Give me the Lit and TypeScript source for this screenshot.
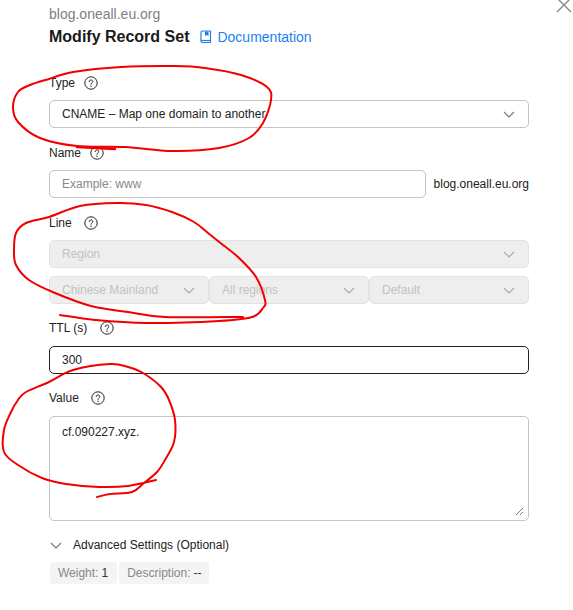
import { LitElement, html, css, svg } from "lit";
import { customElement } from "lit/decorators.js";

type P = [number, number];
const strokes: { pts: P[]; w?: number }[] = [
  { pts: [[49,79],[30,85],[18,92],[13,107],[18,122],[40,138],[77,146],[125,147],[172,151],[219,148],[249,138],[263,123],[271,100],[267,87],[241,75],[205,68],[175,66],[121,67],[73,72],[49,79]] },
  { pts: [[77,147],[115,149]], w: 2.5 },
  { pts: [[243,317],[165,317],[128,312],[91,306],[55,293],[29,280],[16,265],[14,250],[16,233],[26,223],[49,217],[80,206],[117,203],[146,205],[172,212],[194,222],[208,233],[223,245],[238,257],[256,277],[265,300],[263,308],[252,317],[219,321],[146,323],[95,320],[60,315]] },
  { pts: [[156,480],[128,486],[99,487],[66,484],[42,478],[18,465],[4,452],[4,430],[11,412],[18,400],[26,392],[49,382],[73,370],[110,364],[128,367],[143,373],[161,387],[169,400],[175,420],[174,442],[165,460],[157,472],[144,483],[132,492],[110,494],[97,497]] },
];

function smooth(p: P[]): string {
  let d = `M${p[0][0]} ${p[0][1]}`;
  for (let i = 0; i < p.length - 1; i++) {
    const a = p[Math.max(0, i - 1)], b = p[i], c = p[i + 1], e = p[Math.min(p.length - 1, i + 2)];
    const c1 = [b[0] + (c[0] - a[0]) / 6, b[1] + (c[1] - a[1]) / 6];
    const c2 = [c[0] - (e[0] - b[0]) / 6, c[1] - (e[1] - b[1]) / 6];
    d += ` C${c1[0].toFixed(1)} ${c1[1].toFixed(1)} ${c2[0].toFixed(1)} ${c2[1].toFixed(1)} ${c[0]} ${c[1]}`;
  }
  return d;
}

const help = html`<svg class="help" width="14" height="14" viewBox="0 0 14 14" fill="none">
  <circle cx="7" cy="7" r="6.2" stroke="#222" stroke-width="1"/>
  <path d="M5.2 5.6C5.2 4.6 6 4 7 4s1.8.6 1.8 1.5c0 1.3-1.8 1.4-1.8 2.8" stroke="#222" stroke-width="1" stroke-linecap="round"/>
  <circle cx="7" cy="10.2" r=".7" fill="#222"/>
</svg>`;

const chevron = html`<svg class="chev" width="12" height="7" viewBox="0 0 12 7" fill="none">
  <path d="M1 1l5 5 5-5" stroke="currentColor" stroke-width="1.1"/>
</svg>`;

@customElement("app-root")
export class AppRoot extends LitElement {
  static styles = css`
    :host {
      display: block;
      position: relative;
      width: 573px;
      height: 610px;
      overflow: hidden;
      background: #fff;
      font-family: "Liberation Sans", Arial, sans-serif;
      font-size: 12px;
      color: #222;
    }
    .panel {
      display: flex;
      flex-direction: column;
      width: 480px;
      padding: 6px 44px 0 49px;
    }
    .domain { line-height: 16px; color: #808080; height: 16px; font-size: 14px; }
    .head { display: flex; align-items: center; height: 20px; margin-top: 5px; }
    .title { font-size: 16px; font-weight: 700; color: #1a1a1a; margin-right: 11px; }
    .doc { display: flex; align-items: center; gap: 5px; color: #1e7fef; font-size: 14px; }
    .label { display: flex; align-items: center; height: 16px; color: #222; line-height: 16px; }
    .help { margin-left: 9px; flex: none; }
    .wide .help { margin-left: 13px; }
    .mid .help { margin-left: 12px; }
    .l-type { margin-top: 28px; }
    .l-name { margin-top: 17px; }
    .l-line { margin-top: 17px; }
    .l-ttl { margin-top: 16px; }
    .l-value { margin-top: 16px; }
    .ctl {
      box-sizing: border-box;
      height: 28px;
      border: 1px solid #c4c4c4;
      border-radius: 5px;
      display: flex;
      align-items: center;
      justify-content: space-between;
      padding: 0 13px 0 12px;
      margin-top: 9px;
      color: #222;
      background: #fff;
    }
    .chev { color: #777; flex: none; }
    .name-row { display: flex; align-items: center; gap: 8px; margin-top: 9px; }
    .name-row .ctl { flex: 1; margin-top: 0; color: #888; }
    .suffix { white-space: nowrap; color: #222; }
    .off { background: #eee; border-color: #e2e2e2; color: #c2c2c2; }
    .off .chev { color: #a8a8a8; }
    .trio { display: grid; grid-template-columns: 160px 160px 160px; margin-top: 8px; }
    .trio .ctl { margin-top: 0; }
    .active { border-color: #222; }
    .ttl { margin-top: 10px; }
    .area {
      position: relative;
      box-sizing: border-box;
      height: 105px;
      border: 1px solid #c4c4c4;
      border-radius: 5px;
      padding: 8px 12px;
      margin-top: 10px;
      line-height: 14px;
    }
    .grip { position: absolute; right: 4px; bottom: 4px; }
    .adv { display: flex; align-items: center; gap: 11px; height: 16px; margin-top: 16px; color: #222; }
    .adv .chev { color: #777; margin-left: 1px; }
    .tags { display: flex; gap: 2px; margin-top: 9px; margin-left: 1px; }
    .tag {
      display: flex;
      align-items: center;
      height: 22px;
      padding: 0 8px;
      background: #f4f4f4;
      border-radius: 3px;
      color: #888;
      gap: 3px;
    }
    .tag:first-child { padding-right: 9px; }
    .tag:last-child { padding-right: 7px; }
    .tag b { font-weight: 400; color: #333; }
    .close { position: absolute; right: 0; top: -3px; }
    .ink { position: absolute; left: 0; top: 0; pointer-events: none; }
  `;

  render() {
    return html`
      <div class="panel">
        <div class="domain">blog.oneall.eu.org</div>
        <div class="head">
          <span class="title">Modify Record Set</span>
          <span class="doc">
            <svg width="12" height="14" viewBox="0 0 12 14" fill="none">
              <path d="M2.5 1H10.5V12.5H2.5C1.6 12.5 1 11.9 1 11V2.5C1 1.6 1.6 1 2.5 1Z" stroke="#1e7fef" stroke-width="1.2"/>
              <path d="M1 10.5H10.5" stroke="#1e7fef" stroke-width="1.2"/>
              <path d="M5 1.5H8.5V6L6.75 5L5 6Z" fill="#1e7fef"/>
            </svg>
            Documentation
          </span>
        </div>

        <div class="label l-type">Type${help}</div>
        <div class="ctl"><span>CNAME – Map one domain to another</span>${chevron}</div>

        <div class="label l-name">Name${help}</div>
        <div class="name-row">
          <div class="ctl">Example: www</div>
          <span class="suffix">blog.oneall.eu.org</span>
        </div>

        <div class="label l-line mid">Line${help}</div>
        <div class="ctl off"><span>Region</span>${chevron}</div>
        <div class="trio">
          <div class="ctl off"><span>Chinese Mainland</span>${chevron}</div>
          <div class="ctl off"><span>All regions</span>${chevron}</div>
          <div class="ctl off"><span>Default</span>${chevron}</div>
        </div>

        <div class="label l-ttl wide">TTL (s)${help}</div>
        <div class="ctl active ttl">300</div>

        <div class="label l-value mid">Value${help}</div>
        <div class="area">
          cf.090227.xyz.
          <svg class="grip" width="9" height="9" viewBox="0 0 9 9" fill="none">
            <path d="M1 8L8 1M5 8L8 5" stroke="#777" stroke-width="1"/>
          </svg>
        </div>

        <div class="adv">${chevron}<span>Advanced Settings (Optional)</span></div>
        <div class="tags">
          <div class="tag">Weight: <b>1</b></div>
          <div class="tag">Description: <b>--</b></div>
        </div>
      </div>

      <svg class="close" width="18" height="16" viewBox="0 0 18 16" fill="none">
        <path d="M2 1L16 15M16 1L2 15" stroke="#888" stroke-width="1.4"/>
      </svg>

      <svg class="ink" width="573" height="610" viewBox="0 0 573 610" fill="none">
        ${strokes.map(
          (s) => svg`<path d=${smooth(s.pts)} stroke="#f00000" stroke-width=${s.w ?? 2} stroke-linecap="round" stroke-linejoin="round"/>`
        )}
      </svg>
    `;
  }
}
